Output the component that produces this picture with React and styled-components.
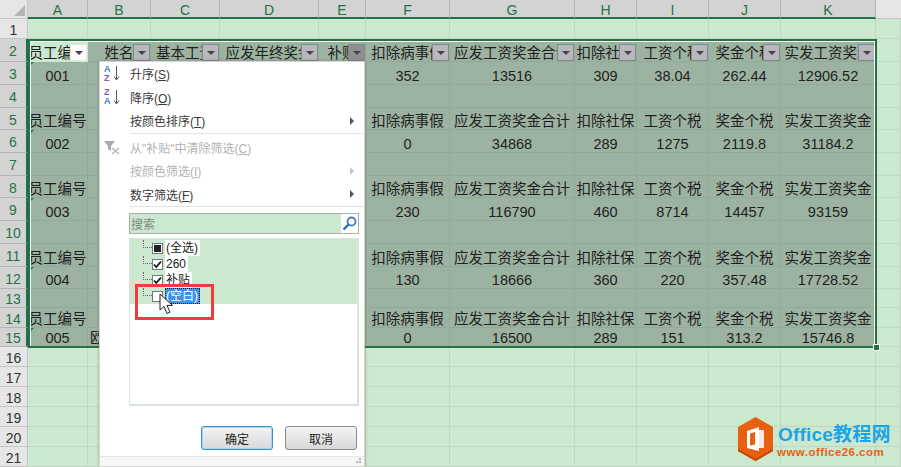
import React from 'react';
import styled, { createGlobalStyle, css } from 'styled-components';

const GlobalStyle = createGlobalStyle`
  html, body {
    margin: 0;
    padding: 0;
    background: #cce8cf;
    overflow: hidden;
  }
`;

const FONT = `"Liberation Sans", "Noto Sans CJK SC", sans-serif`;
const GREEN = '#217346';

const COLUMNS = ['A', 'B', 'C', 'D', 'E', 'F', 'G', 'H', 'I', 'J', 'K'];
const ROW_HEIGHTS = [20, 23, 23, 23, 22, 23, 23, 22, 23, 23, 23, 22, 19, 20, 19, 20, 20, 20, 20, 20, 20];
const HEADERS = ['员工编号', '姓名', '基本工资', '应发年终奖金', '补贴', '扣除病事假', '应发工资奖金合计', '扣除社保', '工资个税', '奖金个税', '实发工资奖金'];
// the filter menu hides columns B-E below the header row
const LABELS = ['员工编号', '', '', '', '', '扣除病事假', '应发工资奖金合计', '扣除社保', '工资个税', '奖金个税', '实发工资奖金'];

const blank = Array(11).fill('');
const SHEET = {
  2: HEADERS,
  3: ['001', '', '', '', '', '352', '13516', '309', '38.04', '262.44', '12906.52'],
  5: LABELS,
  6: ['002', '', '', '', '', '0', '34868', '289', '1275', '2119.8', '31184.2'],
  8: LABELS,
  9: ['003', '', '', '', '', '230', '116790', '460', '8714', '14457', '93159'],
  11: LABELS,
  12: ['004', '', '', '', '', '130', '18666', '360', '220', '357.48', '17728.52'],
  14: LABELS,
  15: ['005', '欧阳明月', '', '', '', '0', '16500', '289', '151', '313.2', '15746.8'],
};
const FLAGGED_ROWS = [3, 6, 9, 12, 15];

const Sheet = styled.div`
  position: relative;
  width: 901px;
  height: 467px;
  overflow: hidden;
  display: grid;
  grid-template-columns: 28px 60px 63px 69px 99px 47px 84px 125px 62px 72px 72px 95px 25px;
  grid-template-rows: 19px ${ROW_HEIGHTS.map((h) => `${h}px`).join(' ')};
  background: #cce8cf;
  font-family: ${FONT};
`;

const Corner = styled.div`
  background: #e6e6e6;
  border-right: 1px solid #c4c4c4;
  border-bottom: 1px solid #c4c4c4;
  box-sizing: border-box;
  display: flex;
  align-items: flex-end;
  justify-content: flex-end;
  padding: 0 2px 2px 0;
  &::after {
    content: '';
    width: 0;
    height: 0;
    border-left: 11px solid transparent;
    border-bottom: 11px solid #b5b5b5;
  }
`;

const ColHeader = styled.div`
  box-sizing: border-box;
  background: #d3d3d3;
  border-right: 1px solid #b4b4b4;
  border-bottom: 2px solid ${GREEN};
  color: ${GREEN};
  font-size: 14px;
  line-height: 20px;
  text-align: center;
`;

const HeaderFill = styled.div`
  background: #e6e6e6;
  border-bottom: 1px solid #c4c4c4;
  box-sizing: border-box;
`;

const RowHeader = styled.div`
  box-sizing: border-box;
  background: ${({ $active }) => ($active ? '#d3d3d3' : '#e6e6e6')};
  border-bottom: 1px solid ${({ $active }) => ($active ? '#b4b4b4' : '#c4c4c4')};
  border-right: ${({ $active }) => ($active ? `2px solid ${GREEN}` : '1px solid #c4c4c4')};
  color: ${({ $active }) => ($active ? GREEN : '#333')};
  font-size: 14px;
  padding-top: 2px;
  display: flex;
  align-items: center;
  justify-content: center;
`;

const Cell = styled.div`
  position: relative;
  box-sizing: border-box;
  min-width: 0;
  overflow: hidden;
  white-space: nowrap;
  display: flex;
  align-items: flex-end;
  justify-content: center;
  font-size: 14.5px;
  line-height: 15px;
  color: #1e1e1e;
  border-right: 1px solid #bfd8c3;
  border-bottom: 1px solid #bfd8c3;
  ${({ $selected }) =>
    $selected &&
    css`
      background: #9db3a1;
      border-color: #94aa98;
    `}
  ${({ $active }) =>
    $active &&
    css`
      background: #cce8cf;
      border-color: #cce8cf;
    `}
  ${({ $flag }) =>
    $flag &&
    css`
      &::before {
        content: '';
        position: absolute;
        top: 0;
        left: 1px;
        border-top: 5px solid #1e7a3c;
        border-right: 5px solid transparent;
      }
    `}
`;

const FilterButton = styled.span`
  position: absolute;
  right: 0;
  bottom: 0;
  width: 17px;
  height: 17px;
  box-sizing: border-box;
  display: flex;
  align-items: center;
  justify-content: center;
  background: ${({ $white, $open }) => ($white ? '#fbfcfb' : $open ? '#8f9096' : '#b7b7be')};
  border: 1px solid ${({ $white }) => ($white ? '#e2e8e2' : '#85878a')};
  &::after {
    content: '';
    border-top: 4px solid #444;
    border-left: 4px solid transparent;
    border-right: 4px solid transparent;
  }
`;

const SelectionFrame = styled.div`
  position: absolute;
  left: 28px;
  top: 39px;
  width: 849px;
  height: 309px;
  box-sizing: border-box;
  border: 2px solid ${GREEN};
  box-shadow: inset 1px 1px 0 #fff, inset -1px 0 0 #fff;
  pointer-events: none;
  &::after {
    content: '';
    position: absolute;
    right: -5px;
    bottom: -5px;
    width: 5px;
    height: 5px;
    background: ${GREEN};
    border: 1px solid #fff;
  }
`;

const Menu = styled.div`
  position: absolute;
  left: 99px;
  top: 61px;
  width: 266px;
  height: 406px;
  box-sizing: border-box;
  background: #fff;
  border: 1px solid #d5d5d5;
  box-shadow: 0 0 3px rgba(60, 60, 60, 0.35);
  display: flex;
  flex-direction: column;
  font-size: 12px;
  color: #3a3a3a;
`;

const MenuItem = styled.div`
  height: 23.5px;
  flex: none;
  display: flex;
  align-items: center;
  color: ${({ $disabled }) => ($disabled ? '#b2b2b2' : '#3a3a3a')};
  u {
    text-underline-offset: 1px;
  }
`;

const MenuIcon = styled.div`
  width: 30px;
  flex: none;
  display: flex;
  justify-content: flex-start;
  padding-left: 4px;
  box-sizing: border-box;
`;

const MenuLabel = styled.span`
  flex: 1;
`;

const SubArrow = styled.span`
  margin-right: 10px;
  border-left: 4px solid ${({ $disabled }) => ($disabled ? '#c4c4c4' : '#555')};
  border-top: 4px solid transparent;
  border-bottom: 4px solid transparent;
`;

const Separator = styled.div`
  height: 1px;
  flex: none;
  margin: 0 0 ${({ $gap }) => $gap}px 30px;
  background: #e2e2e2;
`;

const SortIconWrap = styled.div`
  display: flex;
  align-items: center;
  gap: 2px;
`;

const SortLetters = styled.div`
  display: flex;
  flex-direction: column;
  font-size: 9px;
  line-height: 9px;
  font-weight: 700;
`;

const SortLetter = styled.span`
  color: ${({ $tone }) => ($tone === 'blue' ? '#3c7fc4' : '#8a58ad')};
`;

const SearchRow = styled.div`
  height: 21px;
  flex: none;
  margin-left: 29px;
  width: 230px;
  box-sizing: border-box;
  border: 1px solid #a9b2aa;
  background: #cce8cf;
  display: flex;
  justify-content: space-between;
  align-items: center;
  padding-left: 1px;
  color: #7c8a7e;
`;

const SearchIcon = styled.div`
  width: 17px;
  height: 19px;
  background: #fff;
  display: flex;
  align-items: center;
  justify-content: center;
`;

const TreeBox = styled.div`
  flex: none;
  margin: 4px 0 0 29px;
  width: 230px;
  height: 168px;
  box-sizing: border-box;
  border: 1px solid #dbe3dd;
  border-right-width: 2px;
  border-bottom-width: 2px;
  background: #fff;
`;

const TreeList = styled.div`
  background: #cce8cf;
  height: 65px;
  padding: 1px 0 0 13px;
  display: flex;
  flex-direction: column;
  box-sizing: border-box;
`;

const TreeRow = styled.div`
  height: 16px;
  flex: none;
  display: flex;
  align-items: center;
`;

const TreeDots = styled.span`
  width: 9px;
  height: 8px;
  margin-top: -8px;
  flex: none;
  border-left: 1px dotted #666;
  border-bottom: 1px dotted #666;
  box-sizing: border-box;
`;

const CheckBox = styled.span`
  width: 11px;
  height: 11px;
  flex: none;
  box-sizing: border-box;
  border: 1px solid #777;
  background: #fff;
  display: flex;
  align-items: center;
  justify-content: center;
  ${({ $partial }) =>
    $partial &&
    css`
      &::after {
        content: '';
        width: 7px;
        height: 7px;
        background: #222;
      }
    `}
`;

const TreeText = styled.span`
  margin-left: 2px;
  padding: 0 2px 0 1px;
  line-height: 16px;
  font-size: 12px;
  color: #222;
  background: #fff;
  ${({ $selected }) =>
    $selected &&
    css`
      background: #3a94e8;
      color: #fff;
      outline: 1px dotted #222;
      outline-offset: -1px;
    `}
`;

const ButtonRow = styled.div`
  flex: none;
  display: flex;
  gap: 12px;
  justify-content: flex-end;
  margin: 20px 7px 0 0;
`;

const DialogButton = styled.div`
  width: 72px;
  height: 24px;
  box-sizing: border-box;
  border-radius: 3px;
  border: 1px solid ${({ $primary }) => ($primary ? '#3c90c8' : '#8a8a8a')};
  box-shadow: ${({ $primary }) => ($primary ? 'inset 0 0 0 1px #a8d8f0' : 'none')};
  background: linear-gradient(#f4f4f4, #d8d8d8);
  display: flex;
  align-items: center;
  justify-content: center;
  color: #222;
`;

const Grip = styled.div`
  margin-top: auto;
  height: 10px;
  flex: none;
  box-sizing: border-box;
  border-top: 1px solid #e6e6e6;
  background: #f6f6f6;
  display: flex;
  justify-content: flex-end;
  align-items: center;
  padding-right: 3px;
`;

const Highlight = styled.div`
  position: absolute;
  left: 135px;
  top: 284px;
  width: 79px;
  height: 36px;
  box-sizing: border-box;
  border: 3px solid #f03b3f;
`;

const Pointer = styled.svg`
  position: absolute;
  left: 159px;
  top: 293px;
`;

const Logo = styled.div`
  position: absolute;
  left: 737px;
  top: 417px;
  display: flex;
  align-items: center;
  gap: 4px;
`;

const LogoText = styled.div`
  display: flex;
  flex-direction: column;
  font-weight: 700;
  margin-top: 4px;
`;

const LogoTitle = styled.span`
  color: #1ba5e6;
  font-size: 19px;
  line-height: 22px;
  letter-spacing: 0.2px;
  white-space: nowrap;
`;

const LogoUrl = styled.span`
  color: #ea5f12;
  font-size: 11.5px;
  line-height: 13px;
  letter-spacing: 0.45px;
  margin-left: -1px;
  white-space: nowrap;
`;

function SortIcon({ top, bottom, topTone, bottomTone }) {
  return (
    <SortIconWrap>
      <SortLetters>
        <SortLetter $tone={topTone}>{top}</SortLetter>
        <SortLetter $tone={bottomTone}>{bottom}</SortLetter>
      </SortLetters>
      <svg width="7" height="15" viewBox="0 0 7 15">
        <path d="M3.5 0v13M1 10.5l2.5 3.500 2.500-3.500" fill="none" stroke="#555" strokeWidth="1" />
      </svg>
    </SortIconWrap>
  );
}

function ClearFilterIcon() {
  return (
    <svg width="17" height="15" viewBox="0 0 17 15">
      <path d="M0 1h11L7 6v5L4 9V6z" fill="#a9a9a9" />
      <path d="M8 8l7 6M15 8l-7 6" stroke="#b5b5b5" strokeWidth="1.3" />
    </svg>
  );
}

function CheckMark() {
  return (
    <svg width="9" height="9" viewBox="0 0 9 9">
      <path d="M1 4.5l2.300 2.500L8 1.500" fill="none" stroke="#111" strokeWidth="1.8" />
    </svg>
  );
}

function GripDots() {
  return (
    <svg width="8" height="7" viewBox="0 0 8 7">
      <path d="M6 0h2v2H6zM3 3h2v2H3zM6 3h2v2H6z" fill="#b5b5b5" />
    </svg>
  );
}

function SheetRows() {
  const cells = [];
  ROW_HEIGHTS.forEach((_, r) => {
    const rowNo = r + 1;
    const active = rowNo >= 2 && rowNo <= 15;
    const values = SHEET[rowNo] || blank;
    cells.push(
      <RowHeader key={`h${rowNo}`} $active={active}>
        {rowNo}
      </RowHeader>
    );
    COLUMNS.forEach((col, c) => {
      cells.push(
        <Cell
          key={`${col}${rowNo}`}
          $selected={active}
          $active={rowNo === 2 && c === 0}
          $flag={c === 0 && FLAGGED_ROWS.includes(rowNo)}
        >
          {values[c]}
          {rowNo === 2 && <FilterButton $white={c === 0} $open={c === 4} />}
        </Cell>
      );
    });
    cells.push(<Cell key={`x${rowNo}`} />);
  });
  return cells;
}

function FilterMenu() {
  return (
    <Menu>
      <MenuItem>
        <MenuIcon>
          <SortIcon top="A" bottom="Z" topTone="blue" bottomTone="purple" />
        </MenuIcon>
        <MenuLabel>
          升序(<u>S</u>)
        </MenuLabel>
      </MenuItem>
      <MenuItem>
        <MenuIcon>
          <SortIcon top="Z" bottom="A" topTone="purple" bottomTone="blue" />
        </MenuIcon>
        <MenuLabel>
          降序(<u>O</u>)
        </MenuLabel>
      </MenuItem>
      <MenuItem>
        <MenuIcon />
        <MenuLabel>
          按颜色排序(<u>T</u>)
        </MenuLabel>
        <SubArrow />
      </MenuItem>
      <Separator $gap={2} />
      <MenuItem $disabled>
        <MenuIcon>
          <ClearFilterIcon />
        </MenuIcon>
        <MenuLabel>
          从"补贴"中清除筛选(<u>C</u>)
        </MenuLabel>
      </MenuItem>
      <MenuItem $disabled>
        <MenuIcon />
        <MenuLabel>
          按颜色筛选(<u>I</u>)
        </MenuLabel>
        <SubArrow $disabled />
      </MenuItem>
      <MenuItem>
        <MenuIcon />
        <MenuLabel>
          数字筛选(<u>F</u>)
        </MenuLabel>
        <SubArrow />
      </MenuItem>
      <Separator $gap={6} />
      <SearchRow>
        搜索
        <SearchIcon>
          <svg width="15" height="15" viewBox="0 0 15 15">
            <circle cx="9.5" cy="5.5" r="4" fill="#fff" stroke="#3f7fb5" strokeWidth="1.8" />
            <path d="M6.5 8.5L1.5 13.5" stroke="#2f6ea6" strokeWidth="2.4" />
          </svg>
        </SearchIcon>
      </SearchRow>
      <TreeBox>
        <TreeList>
          <TreeRow>
            <TreeDots />
            <CheckBox $partial />
            <TreeText>(全选)</TreeText>
          </TreeRow>
          <TreeRow>
            <TreeDots />
            <CheckBox>
              <CheckMark />
            </CheckBox>
            <TreeText>260</TreeText>
          </TreeRow>
          <TreeRow>
            <TreeDots />
            <CheckBox>
              <CheckMark />
            </CheckBox>
            <TreeText>补贴</TreeText>
          </TreeRow>
          <TreeRow>
            <TreeDots />
            <CheckBox />
            <TreeText $selected>(空白)</TreeText>
          </TreeRow>
        </TreeList>
      </TreeBox>
      <ButtonRow>
        <DialogButton $primary>确定</DialogButton>
        <DialogButton>取消</DialogButton>
      </ButtonRow>
      <Grip>
        <GripDots />
      </Grip>
    </Menu>
  );
}

export default function App() {
  return (
    <>
      <GlobalStyle />
      <Sheet>
        <Corner />
        {COLUMNS.map((col) => (
          <ColHeader key={col}>{col}</ColHeader>
        ))}
        <HeaderFill />
        {SheetRows()}
        <SelectionFrame />
        <FilterMenu />
        <Highlight />
        <Pointer width="14" height="23" viewBox="0 0 14 23">
          <path d="M1 1v16l4-3.500 3 7 3-1.300-3-6.800h5.500z" fill="#fff" stroke="#222" strokeWidth="1" />
        </Pointer>
        <Logo>
          <svg width="37" height="44" viewBox="0 0 37 44">
            <path d="M18.500 0L36 10v24L18.500 44 1 34V10z" fill="#e8600f" />
            <path d="M1 32l17.500 10L36 32v2L18.500 44 1 34z" fill="#b84a0a" />
            <path d="M10 14l12-4v24l-12-3zM13 16.500v12l5-1V15z" fill="#fff" fillRule="evenodd" />
            <path d="M22 13h5v18h-5z" fill="#fff" opacity="0.85" />
          </svg>
          <LogoText>
            <LogoTitle>Office教程网</LogoTitle>
            <LogoUrl>www.office26.com</LogoUrl>
          </LogoText>
        </Logo>
      </Sheet>
    </>
  );
}
